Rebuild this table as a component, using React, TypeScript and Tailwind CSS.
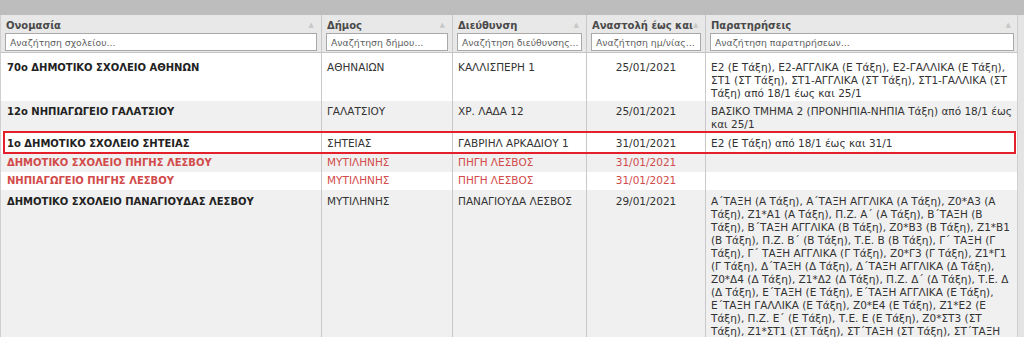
import React from 'react';

const cols = [
  { key: 'name', label: 'Ονομασία', ph: 'Αναζήτηση σχολείου...', w: 'w-[320px]' },
  { key: 'dimos', label: 'Δήμος', ph: 'Αναζήτηση δήμου...', w: 'w-[131px]' },
  { key: 'addr', label: 'Διεύθυνση', ph: 'Αναζήτηση διεύθυνσης...', w: 'w-[134px]' },
  { key: 'date', label: 'Αναστολή έως και', ph: 'Αναζήτηση ημ/νίας...', w: 'w-[119px]' },
  { key: 'notes', label: 'Παρατηρήσεις', ph: 'Αναζήτηση παρατηρήσεων...', w: 'w-[313px]' },
];

type Row = {
  name: string;
  dimos: string;
  addr: string;
  date: string;
  notes: string[];
  h: string;
  pt: string;
  red?: boolean;
  highlight?: boolean;
};

const rows: Row[] = [
  {
    name: '70ο ΔΗΜΟΤΙΚΟ ΣΧΟΛΕΙΟ ΑΘΗΝΩΝ',
    dimos: 'ΑΘΗΝΑΙΩΝ',
    addr: 'ΚΑΛΛΙΣΠΕΡΗ 1',
    date: '25/01/2021',
    notes: [
      'Ε2 (Ε Τάξη), Ε2-ΑΓΓΛΙΚΑ (Ε Τάξη), Ε2-ΓΑΛΛΙΚΑ (Ε Τάξη),',
      'ΣΤ1 (ΣΤ Τάξη), ΣΤ1-ΑΓΓΛΙΚΑ (ΣΤ Τάξη), ΣΤ1-ΓΑΛΛΙΚΑ (ΣΤ',
      'Τάξη) από 18/1 έως και 25/1',
    ],
    h: 'h-[48px]',
    pt: 'pt-[8px]',
  },
  {
    name: '12ο ΝΗΠΙΑΓΩΓΕΙΟ ΓΑΛΑΤΣΙΟΥ',
    dimos: 'ΓΑΛΑΤΣΙΟΥ',
    addr: 'ΧΡ. ΛΑΔΑ 12',
    date: '25/01/2021',
    notes: ['ΒΑΣΙΚΟ ΤΜΗΜΑ 2 (ΠΡΟΝΗΠΙΑ-ΝΗΠΙΑ Τάξη) από 18/1 έως', 'και 25/1'],
    h: 'h-[30px]',
    pt: 'pt-[4px]',
  },
  {
    name: '1ο ΔΗΜΟΤΙΚΟ ΣΧΟΛΕΙΟ ΣΗΤΕΙΑΣ',
    dimos: 'ΣΗΤΕΙΑΣ',
    addr: 'ΓΑΒΡΙΗΛ ΑΡΚΑΔΙΟΥ 1',
    date: '31/01/2021',
    notes: ['Ε2 (Ε Τάξη) από 18/1 έως και 31/1'],
    h: 'h-[23px]',
    pt: 'pt-[6px]',
    highlight: true,
  },
  {
    name: 'ΔΗΜΟΤΙΚΟ ΣΧΟΛΕΙΟ ΠΗΓΗΣ ΛΕΣΒΟΥ',
    dimos: 'ΜΥΤΙΛΗΝΗΣ',
    addr: 'ΠΗΓΗ ΛΕΣΒΟΣ',
    date: '31/01/2021',
    notes: [],
    h: 'h-[18px]',
    pt: 'pt-[2px]',
    red: true,
  },
  {
    name: 'ΝΗΠΙΑΓΩΓΕΙΟ ΠΗΓΗΣ ΛΕΣΒΟΥ',
    dimos: 'ΜΥΤΙΛΗΝΗΣ',
    addr: 'ΠΗΓΗ ΛΕΣΒΟΣ',
    date: '31/01/2021',
    notes: [],
    h: 'h-[18px]',
    pt: 'pt-[2px]',
    red: true,
  },
  {
    name: 'ΔΗΜΟΤΙΚΟ ΣΧΟΛΕΙΟ ΠΑΝΑΓΙΟΥΔΑΣ ΛΕΣΒΟΥ',
    dimos: 'ΜΥΤΙΛΗΝΗΣ',
    addr: 'ΠΑΝΑΓΙΟΥΔΑ ΛΕΣΒΟΣ',
    date: '29/01/2021',
    notes: [
      'Α΄ΤΑΞΗ (Α Τάξη), Α΄ΤΑΞΗ ΑΓΓΛΙΚΑ (Α Τάξη), Ζ0*Α3 (Α',
      'Τάξη), Ζ1*Α1 (Α Τάξη), Π.Ζ. Α΄ (Α Τάξη), Β΄ΤΑΞΗ (Β',
      'Τάξη), Β΄ΤΑΞΗ ΑΓΓΛΙΚΑ (Β Τάξη), Ζ0*Β3 (Β Τάξη), Ζ1*Β1',
      '(Β Τάξη), Π.Ζ. Β΄ (Β Τάξη), Τ.Ε. Β (Β Τάξη), Γ΄ ΤΑΞΗ (Γ',
      'Τάξη), Γ΄ ΤΑΞΗ ΑΓΓΛΙΚΑ (Γ Τάξη), Ζ0*Γ3 (Γ Τάξη), Ζ1*Γ1',
      '(Γ Τάξη), Δ΄ΤΑΞΗ (Δ Τάξη), Δ΄ΤΑΞΗ ΑΓΓΛΙΚΑ (Δ Τάξη),',
      'Ζ0*Δ4 (Δ Τάξη), Ζ1*Δ2 (Δ Τάξη), Π.Ζ. Δ΄ (Δ Τάξη), Τ.Ε. Δ',
      '(Δ Τάξη), Ε΄ΤΑΞΗ (Ε Τάξη), Ε΄ΤΑΞΗ ΑΓΓΛΙΚΑ (Ε Τάξη),',
      'Ε΄ΤΑΞΗ ΓΑΛΛΙΚΑ (Ε Τάξη), Ζ0*Ε4 (Ε Τάξη), Ζ1*Ε2 (Ε',
      'Τάξη), Π.Ζ. Ε΄ (Ε Τάξη), Τ.Ε. Ε (Ε Τάξη), Ζ0*ΣΤ3 (ΣΤ',
      'Τάξη), Ζ1*ΣΤ1 (ΣΤ Τάξη), ΣΤ΄ΤΑΞΗ (ΣΤ Τάξη), ΣΤ΄ΤΑΞΗ',
      'ΑΓΓΛΙΚΑ (ΣΤ Τάξη), ΣΤ΄ΤΑΞΗ ΓΑΛΛΙΚΑ (ΣΤ Τάξη) από 18/1',
      'έως και 29/1',
    ],
    h: 'h-auto',
    pt: 'pt-[5px]',
  },
];

export default function App() {
  return (
    <div
      className="h-[337px] w-[1024px] overflow-hidden bg-[#e4e4e4] text-[10.5px] leading-[13px] text-[#333]"
      style={{ fontFamily: '"DejaVu Sans", Verdana, sans-serif' }}
    >
      {/* top bar */}
      <div className="h-[15px] bg-[#bdbdbd]" />

      <div className="w-[1018px] border-l border-r border-[#cfcfcf] bg-white">
        {/* header */}
        <div className="flex h-[38px] border-b border-[#c4c4c4] bg-[#e8e8e8]">
          {cols.map((c, i) => (
            <div
              key={c.key}
              className={`${c.w} shrink-0 px-[4px] pt-[4px] ${i > 0 ? 'border-l border-[#c8c8c8]' : ''}`}
            >
              <div className="flex h-[13px] items-center justify-between pl-[1px] pr-[3px]">
                <span className="text-[10px] font-bold whitespace-nowrap text-[#4a4a4a]">{c.label}</span>
                <span className="text-[7px] leading-[9px] text-[#c8c8c8]">▲</span>
              </div>
              <div className="mt-[1px] flex h-[18px] items-center overflow-hidden border border-[#a9a9a9] bg-white px-[4px] text-[9.3px] whitespace-nowrap text-[#5e5e5e]">
                {c.ph}
              </div>
            </div>
          ))}
        </div>

        {/* body */}
        {rows.map((r, idx) => {
          const bg = idx % 2 === 0 ? 'bg-white' : 'bg-[#f0f0f0]';
          const color = r.red ? 'text-[#d24a4a]' : 'text-[#333]';
          const cell = `${r.pt} pb-[2px]`;
          return (
            <div key={idx} className={`relative flex ${r.h} ${bg} ${color}`}>
              <div className={`w-[320px] shrink-0 px-[6px] text-[10px] font-bold whitespace-nowrap ${cell} ${r.red ? '' : 'text-[#222]'}`}>
                {r.name}
              </div>
              <div className={`w-[131px] shrink-0 border-l border-[#c8c8c8] px-[5px] whitespace-nowrap ${cell}`}>
                {r.dimos}
              </div>
              <div className={`w-[134px] shrink-0 border-l border-[#c8c8c8] px-[5px] whitespace-nowrap ${cell}`}>
                {r.addr}
              </div>
              <div className={`w-[119px] shrink-0 border-l border-[#c8c8c8] px-[5px] text-center ${cell}`}>
                {r.date}
              </div>
              <div className={`w-[313px] shrink-0 border-l border-[#c8c8c8] px-[5px] text-[#333] ${cell}`}>
                {r.notes.map((l, j) => (
                  <div key={j} className="whitespace-nowrap">
                    {l}
                  </div>
                ))}
              </div>
              {r.highlight && (
                <div className="pointer-events-none absolute top-[0px] bottom-[0px] left-[2px] right-[1px] border-[2.5px] border-[#e3202b]" />
              )}
            </div>
          );
        })}
      </div>
    </div>
  );
}
